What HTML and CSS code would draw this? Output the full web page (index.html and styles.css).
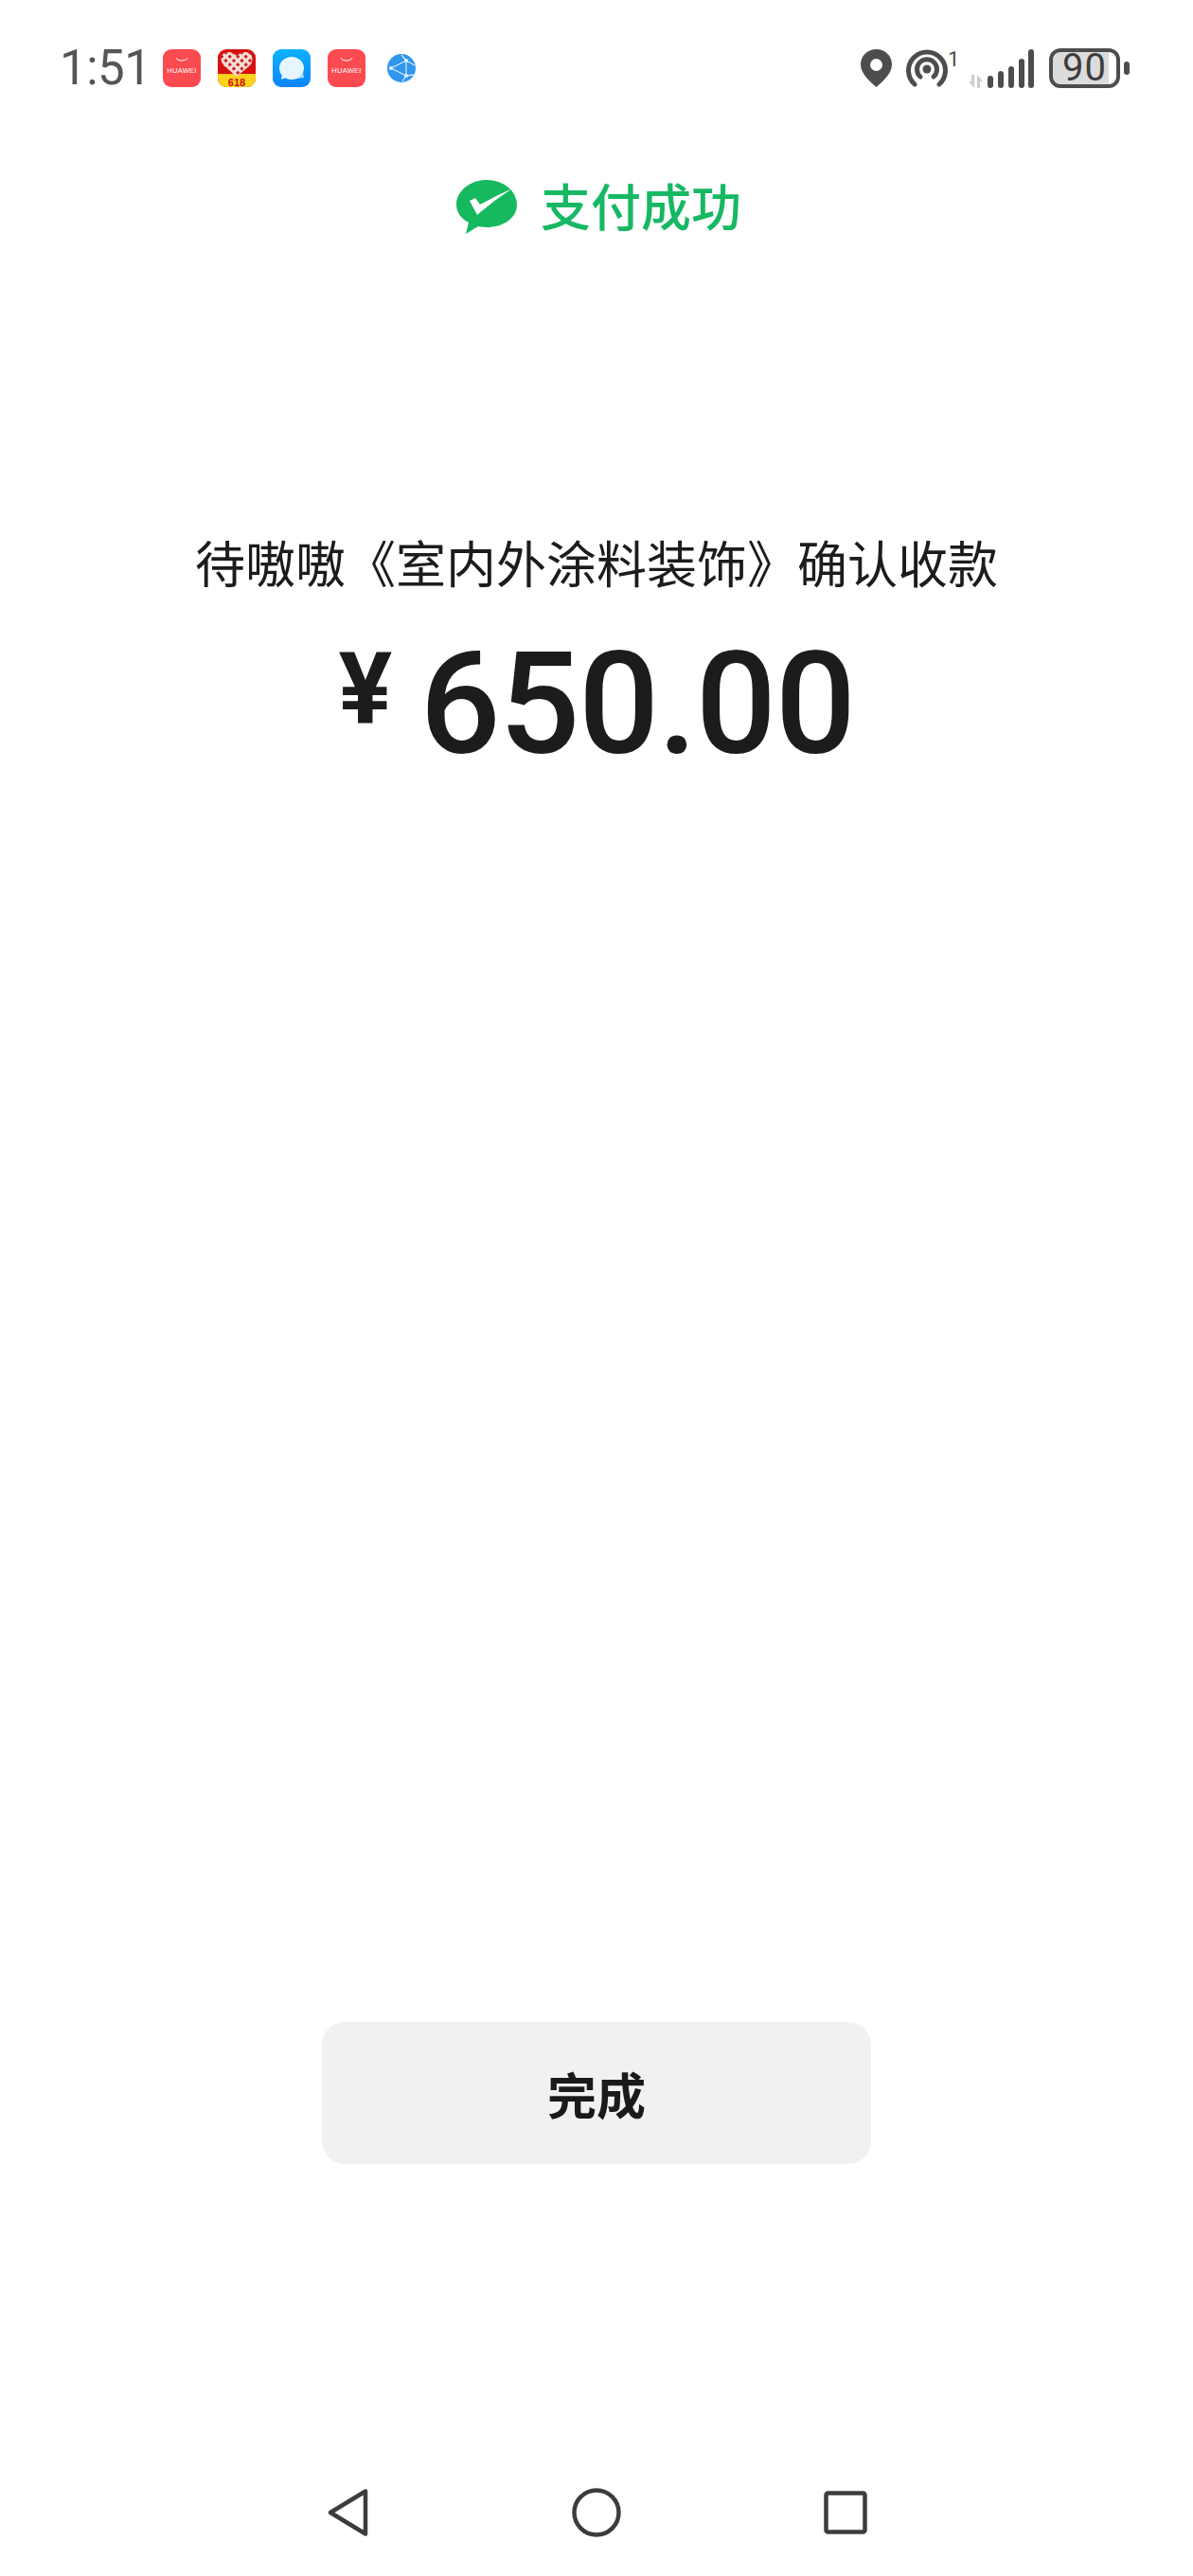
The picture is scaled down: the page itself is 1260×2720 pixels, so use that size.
FILE: index.html
```html
<!DOCTYPE html>
<html lang="zh">
<head>
<meta charset="utf-8">
<title>支付成功</title>
<link rel="stylesheet" href="styles.css">
</head>
<body>
<div class="screen">
  <header class="status">
    <div class="status-left">
      <span class="time">1:51</span>
      <svg class="app" viewBox="0 0 40 40"><rect width="40" height="40" rx="9" fill="#fb4a50"/><path d="M14 9c1 4 11 4 12 0" fill="none" stroke="#fff" stroke-width="1"/><text x="20" y="25" class="hw">HUAWEI</text></svg>
      <svg class="app" viewBox="0 0 40 40"><defs><clipPath id="c"><rect width="40" height="40" rx="9"/></clipPath><pattern id="mosaic" width="6" height="6" patternUnits="userSpaceOnUse" patternTransform="rotate(45)"><rect width="6" height="6" fill="#f7dcd8"/><rect x="1" y="1" width="3" height="3" fill="#c9201c"/></pattern></defs><g clip-path="url(#c)"><rect width="40" height="40" fill="#d9100f"/><rect y="26" width="40" height="14" fill="#fcd21a"/><path d="M20 29 6 17C1 11 4 3 11 3c4 0 7 2 9 4 2-2 5-4 9-4 7 0 10 8 5 14z" fill="url(#mosaic)"/><text x="20" y="38.500" class="pdd">618</text></g></svg>
      <svg class="app" viewBox="0 0 40 40"><defs><linearGradient id="m" x1="0" y1="0" x2="0" y2="1"><stop offset="0" stop-color="#0cb2ff"/><stop offset="1" stop-color="#0a84fb"/></linearGradient></defs><rect width="40" height="40" rx="9" fill="url(#m)"/><path d="M25 31l8-1-1-5z" fill="#9fdcff"/><ellipse cx="20" cy="20" rx="13" ry="12" fill="#e6f6ff"/><path d="M10 26l-1 6 7-3z" fill="#e6f6ff"/></svg>
      <svg class="app" viewBox="0 0 40 40"><rect width="40" height="40" rx="9" fill="#fb4a50"/><path d="M14 9c1 4 11 4 12 0" fill="none" stroke="#fff" stroke-width="1"/><text x="20" y="25" class="hw">HUAWEI</text></svg>
      <svg class="globe" viewBox="0 0 30 30"><circle cx="15" cy="15" r="15" fill="#2f96ee"/><path d="M4 15 20 7 20 23zM20 7 29 12M20 7 15 1M20 23 28 22M20 23 16 29" fill="none" stroke="#cfe8fb" stroke-width="1.300"/><circle cx="20" cy="7" r="2" fill="#e4f3fd"/><circle cx="4" cy="15" r="2" fill="#e4f3fd"/><circle cx="20" cy="23" r="2" fill="#e4f3fd"/></svg>
    </div>
    <div class="status-right">
      <svg class="pin" viewBox="0 0 33 40"><path fill-rule="evenodd" d="M16.500 0C7 0 0 7 0 16c0 10 10 18 16.500 24C23 34 33 26 33 16 33 7 26 0 16.500 0zm0 10a6.500 6.500 0 1 1 0 13 6.500 6.500 0 0 1 0-13z" fill="#4d4d4d"/></svg>
      <svg class="hotspot" viewBox="0 0 44 40"><g fill="none" stroke="#4d4d4d" stroke-width="5" stroke-linecap="round"><path d="M9 37a19.500 19.500 0 1 1 26 0"/><path d="M15 29a10.500 10.500 0 1 1 14 0"/></g><circle cx="22" cy="21" r="4.500" fill="#4d4d4d"/></svg>
      <span class="sim">1</span>
      <svg class="signal" viewBox="0 0 70 42"><path d="M7 28v14L1 35h3v-7zM10 28l6 7h-3v7h-3z" fill="#cdcdcd"/><g fill="#4d4d4d"><rect x="21" y="29" width="6" height="13" rx="3"/><rect x="32" y="24" width="6" height="18" rx="3"/><rect x="43" y="19" width="6" height="23" rx="3"/><rect x="54" y="11" width="6" height="31" rx="3"/><rect x="64" y="1" width="6" height="41" rx="3"/></g></svg>
      <div class="battery"><span class="battery-level">90</span></div>
      <span class="battery-nub"></span>
    </div>
  </header>

  <div class="result">
    <svg class="wechat" viewBox="0 0 64 58"><path d="M32 1C14 1 0 13 0 27c0 8 5 15 13 19l-3 12 13-8c3 .6 6 1 9 1 18 0 32-10 32-24S50 1 32 1z" fill="#16b95f"/><path d="M14 23l6-3 5 7q16-9 34-17-20 13-37 28z" fill="#fff"/></svg>
    <span class="result-text">支付成功</span>
  </div>

  <p class="payee">待嗷嗷《室内外涂料装饰》确认收款</p>

  <div class="amount">
    <span class="currency">¥</span>
    <span class="value">650.00</span>
  </div>

  <button class="done">完成</button>

  <nav class="nav">
    <svg class="nav-back" viewBox="0 0 45 52"><path d="M41 3.500 4 26l37 22.500z" fill="none" stroke="#3c3c3c" stroke-width="4.500" stroke-linejoin="round"/></svg>
    <svg class="nav-home" viewBox="0 0 52 52"><circle cx="26" cy="26" r="23.500" fill="none" stroke="#3c3c3c" stroke-width="4.500"/></svg>
    <svg class="nav-recent" viewBox="0 0 46 46"><rect x="2.500" y="2.500" width="41" height="41" rx="2" fill="none" stroke="#3c3c3c" stroke-width="4.500"/></svg>
  </nav>
</div>
</body>
</html>
```

FILE: styles.css
```css
* { box-sizing: border-box; }
html, body { margin: 0; padding: 0; background: #fff; }
.screen {
  width: 1260px;
  height: 2720px;
  display: flex;
  flex-direction: column;
  overflow: hidden;
  background: #fff;
  font-family: "Noto Sans CJK SC", "Noto Sans", sans-serif;
  color: #1c1c1c;
}

/* status bar */
.status {
  display: flex;
  justify-content: space-between;
  align-items: center;
  height: 42px;
  margin-top: 51px;
  padding: 0 67px 0 63px;
}
.status-left, .status-right { display: flex; align-items: center; height: 42px; }
.time {
  width: 109px;
  font: 400 51px/42px Roboto, sans-serif;
  color: #555;
  letter-spacing: -.5px;
}
.app { width: 40px; height: 40px; margin-right: 18px; display: block; }
.globe { width: 30px; height: 30px; margin-left: 5px; display: block; }
.hw { font: 500 7.500px "Liberation Sans", sans-serif; fill: #fff; text-anchor: middle; letter-spacing: .3px; }
.pdd { font: 700 11px "Liberation Sans", sans-serif; fill: #c9100f; text-anchor: middle; }
.pin { width: 33px; height: 40px; margin-right: 15px; }
.hotspot { width: 44px; height: 40px; }
.sim {
  align-self: flex-start;
  width: 21px;
  font: 400 22px/24px Roboto, sans-serif;
  color: #4d4d4d;
}
.signal { width: 70px; height: 42px; margin-right: 16px; }
.battery {
  display: flex;
  justify-content: center;
  align-items: center;
  width: 75px;
  height: 42px;
  border: 4px solid #4d4d4d;
  border-radius: 12px;
  background: linear-gradient(90deg, #dcdcdc 88%, #fff 88%);
}
.battery-level { font: 400 40px/34px Roboto, sans-serif; color: #3d3d3d; letter-spacing: 1px; }
.battery-nub { width: 6px; height: 14px; margin-left: 4px; border-radius: 3px; background: #4d4d4d; }

/* result */
.result {
  display: flex;
  justify-content: center;
  align-items: center;
  gap: 25px;
  height: 58px;
  margin-top: 96px;
  padding-left: 5px;
}
.wechat { width: 64px; height: 58px; display: block; }
.result-text {
  margin-bottom: 5px;
  font-size: 53px;
  line-height: 52px;
  font-weight: 500;
  color: #16b864;
}
.payee {
  margin: 316px 0 0;
  text-align: center;
  font-size: 53px;
  line-height: 60px;
  font-weight: 400;
  color: #1c1c1c;
}
.amount {
  display: flex;
  justify-content: center;
  align-items: flex-start;
  gap: 29px;
  height: 130px;
  margin-top: 56px;
  padding-right: 6px;
}
.currency {
  margin: 11px 0 0 6px;
  font: 700 106px/76px Roboto, sans-serif;
}
.value {
  font: 500 150px/130px Roboto, sans-serif;
  letter-spacing: -1.500px;
}

/* button */
.done {
  display: block;
  width: 580px;
  height: 150px;
  margin: auto 0 0 340px;
  border: 0;
  border-radius: 24px;
  background: #f1f1f1;
  font-family: inherit;
  font-size: 52px;
  font-weight: 700;
  color: #1a1a1a;
}

/* navigation bar */
.nav {
  display: flex;
  align-items: center;
  gap: 214px;
  height: 52px;
  margin: 342px 0 41px;
  padding-left: 345px;
}
.nav-back { width: 45px; height: 52px; display: block; }
.nav-home { width: 52px; height: 52px; display: block; }
.nav-recent { width: 46px; height: 46px; display: block; }
```
